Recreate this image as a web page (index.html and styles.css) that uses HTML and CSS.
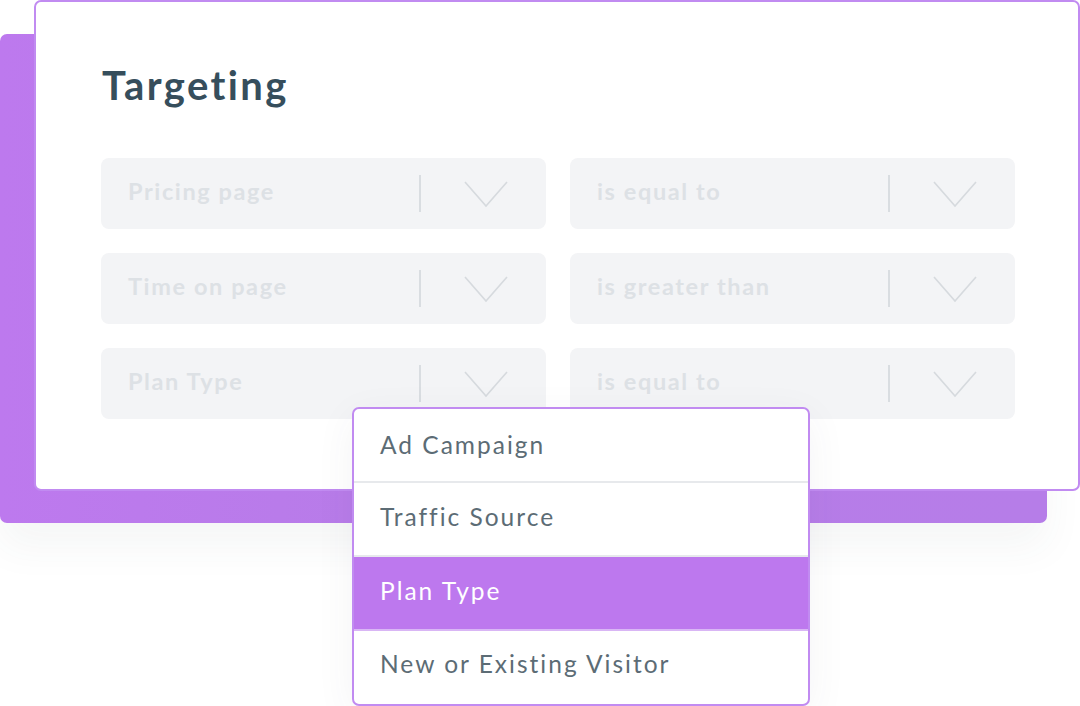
FILE: index.html
```html
<!DOCTYPE html>
<html lang="en">
<head>
    <meta charset="UTF-8">
    <meta name="viewport" content="width=device-width, initial-scale=1.0">
    <title>Targeting</title>
    <link rel="stylesheet" href="styles.css">
</head>
<body>
    <div class="stage">
        <div class="back-card"></div>

        <div class="card">
            <h1>Targeting</h1>

            <div class="rules">
                <div class="field">
                    <span class="label">Pricing page</span>
                    <span class="sep"></span>
                    <svg class="chev" width="44" height="27" viewBox="0 0 44 27"><polyline points="1,1 22,25 43,1" /></svg>
                </div>
                <div class="field">
                    <span class="label">is equal to</span>
                    <span class="sep"></span>
                    <svg class="chev" width="44" height="27" viewBox="0 0 44 27"><polyline points="1,1 22,25 43,1" /></svg>
                </div>
                <div class="field">
                    <span class="label">Time on page</span>
                    <span class="sep"></span>
                    <svg class="chev" width="44" height="27" viewBox="0 0 44 27"><polyline points="1,1 22,25 43,1" /></svg>
                </div>
                <div class="field">
                    <span class="label">is greater than</span>
                    <span class="sep"></span>
                    <svg class="chev" width="44" height="27" viewBox="0 0 44 27"><polyline points="1,1 22,25 43,1" /></svg>
                </div>
                <div class="field">
                    <span class="label">Plan Type</span>
                    <span class="sep"></span>
                    <svg class="chev" width="44" height="27" viewBox="0 0 44 27"><polyline points="1,1 22,25 43,1" /></svg>
                </div>
                <div class="field">
                    <span class="label">is equal to</span>
                    <span class="sep"></span>
                    <svg class="chev" width="44" height="27" viewBox="0 0 44 27"><polyline points="1,1 22,25 43,1" /></svg>
                </div>
            </div>
        </div>

        <ul class="menu">
            <li>Ad Campaign</li>
            <li>Traffic Source</li>
            <li class="active">Plan Type</li>
            <li>New or Existing Visitor</li>
        </ul>
    </div>
</body>
</html>
```

FILE: styles.css
```css
* {
    box-sizing: border-box;
}
html, body {
    margin: 0;
    padding: 0;
    background: #ffffff;
    overflow: hidden;
}
body {
    font-family: Lato, "Open Sans", sans-serif;
    width: 1080px;
    height: 706px;
}
.stage {
    position: relative;
    width: 1080px;
    height: 706px;
}
.back-card {
    position: absolute;
    left: 0;
    top: 34px;
    width: 1047px;
    height: 489px;
    border-radius: 7px;
    background: linear-gradient(90deg, #bd79ee 0%, #b77ce8 40%, #b67de8 100%);
    box-shadow: 0 24px 40px rgba(60, 70, 80, 0.05);
}
.card {
    position: relative;
    margin-left: 34px;
    width: 1046px;
    height: 491px;
    background: #ffffff;
    border: 2px solid #c18bf1;
    border-radius: 7px;
    padding: 59px 0 0 65px;
}
h1 {
    margin: 0 0 49px 1px;
    font-size: 40px;
    line-height: 48px;
    font-weight: 700;
    color: #364e5c;
    letter-spacing: 2.4px;
}
.rules {
    display: grid;
    grid-template-columns: 445px 445px;
    grid-auto-rows: 71px;
    column-gap: 24px;
    row-gap: 24px;
}
.field {
    display: flex;
    align-items: center;
    background: #f3f4f6;
    border-radius: 8px;
    padding: 0 38px 0 27px;
}
.label {
    flex: 1;
    font-size: 23.5px;
    font-weight: 700;
    color: #dde1e5;
    letter-spacing: 1.6px;
    margin-top: -5px;
}
.sep {
    width: 2px;
    height: 37px;
    background: #d9dde1;
    margin-right: 43px;
}
.chev {
    display: block;
    margin-top: 2px;
}
.chev polyline {
    fill: none;
    stroke: #d6dade;
    stroke-width: 1.6;
}
.menu {
    position: absolute;
    left: 352px;
    top: 407px;
    width: 458px;
    height: 299px;
    margin: 0;
    padding: 0;
    list-style: none;
    background: #ffffff;
    border: 2px solid #c18bf1;
    border-radius: 7px;
    overflow: hidden;
    box-shadow: 0 10px 40px rgba(60, 70, 80, 0.06);
}
.menu li {
    height: 74px;
    padding: 0 0 6px 26px;
    display: flex;
    align-items: center;
    font-size: 24.5px;
    color: #5c6c75;
    letter-spacing: 2px;
    border-bottom: 2px solid #e7e9ec;
}
.menu li:first-child {
    padding-bottom: 2px;
}
.menu li:last-child {
    border-bottom: none;
    padding-bottom: 10px;
}
.menu li.active {
    background: #bd78ee;
    color: #ffffff;
    border-bottom-color: #d9b6f5;
}
```
